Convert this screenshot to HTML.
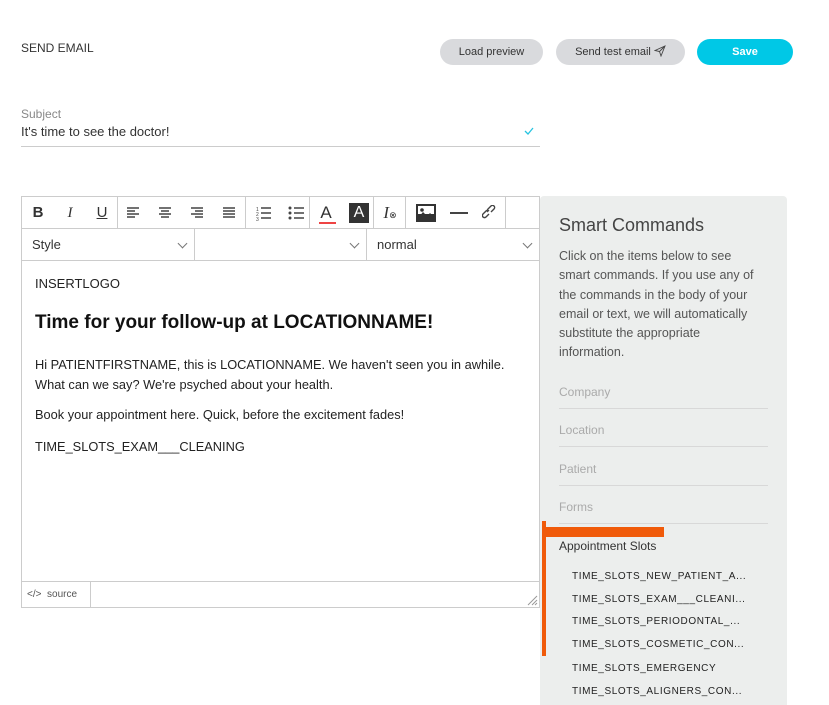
<!DOCTYPE html>
<html><head><meta charset="utf-8"><style>
*{box-sizing:border-box;margin:0;padding:0}
body{width:829px;height:705px;background:#fff;font-family:"Liberation Sans",sans-serif;position:relative;overflow:hidden;color:#333}
.a{position:absolute}
.btn{position:absolute;top:39px;height:26px;border-radius:13px;background:#d9dadd;font-size:11px;color:#333;text-align:center;line-height:26px}
.tb{position:absolute;top:197px;height:32px;border-right:1px solid #ccc}
.ic{position:absolute;top:0;height:32px;line-height:32px;font-size:15px;color:#333;text-align:center;width:32px}
.sel{position:absolute;top:229px;height:31px;border-right:1px solid #ccc;font-size:13px;line-height:31px;padding-left:10px;color:#333}
.chev{position:absolute;right:8px;top:11px;width:7px;height:7px;border-right:1px solid #777;border-bottom:1px solid #777;transform:rotate(45deg)}
.cat{position:absolute;left:559px;width:209px;font-size:12px;color:#aaa;border-bottom:1px solid #d8d8d8;height:24px;line-height:14px}
.ts{position:absolute;left:572px;font-size:10px;letter-spacing:0.6px;color:#222}
</style></head><body>
<div class="a" style="left:21px;top:41px;font-size:12px;color:#333">SEND EMAIL</div>
<div class="btn" style="left:440px;width:103px">Load preview</div>
<div class="btn" style="left:556px;width:129px">Send test email <svg width="12" height="12" viewBox="0 0 12 12" style="vertical-align:-2px"><path d="M1 5.5L11 1 7 11 5.5 6.5z M5.5 6.5L11 1" fill="none" stroke="#444" stroke-width="0.9"/></svg></div>
<div class="btn" style="left:697px;width:96px;background:#00c8e6;color:#fff;font-weight:bold">Save</div>
<div class="a" style="left:21px;top:107px;font-size:12px;color:#888">Subject</div>
<div class="a" style="left:21px;top:124px;font-size:13px;color:#333">It's time to see the doctor!</div>
<svg class="a" style="left:524px;top:127px" width="10" height="8" viewBox="0 0 10 8"><path d="M1 4l3 3 5-6" fill="none" stroke="#27c4e0" stroke-width="1.3"/></svg>
<div class="a" style="left:21px;top:146px;width:519px;height:1px;background:#ccc"></div>

<div class="a" style="left:21px;top:196px;width:519px;height:412px;border:1px solid #ccc"></div>
<div class="a" style="left:22px;top:228px;width:517px;height:1px;background:#ccc"></div>
<div class="a" style="left:22px;top:260px;width:517px;height:1px;background:#ccc"></div>
<div class="tb" style="left:22px;width:96px">
 <div class="ic" style="left:0;font-weight:bold">B</div><div class="ic" style="left:32px;font-style:italic;font-family:'Liberation Serif',serif">I</div><div class="ic" style="left:64px;text-decoration:underline">U</div></div>
<div class="tb" style="left:118px;width:128px">
 <svg class="a" style="left:8px;top:9px" width="112" height="14" viewBox="0 0 112 14" stroke="#444" stroke-width="1.4"><path d="M1 2h12M1 5h8M1 8h12M1 11h8 M33 2h12M35 5h8M33 8h12M35 11h8 M65 2h12M69 5h8M65 8h12M69 11h8 M97 2h12M97 5h12M97 8h12M97 11h12"/></svg></div>
<div class="tb" style="left:246px;width:64px">
 <svg class="a" style="left:10px;top:8px" width="50" height="16" viewBox="0 0 50 16"><text x="0" y="6" font-size="5" fill="#444">1</text><text x="0" y="11" font-size="5" fill="#444">2</text><text x="0" y="16" font-size="5" fill="#444">3</text><path d="M5 3h10M5 8h10M5 13h10 M38 3h10M38 8h10M38 13h10" stroke="#444" stroke-width="1.4"/><circle cx="34" cy="3" r="1.5" fill="#444"/><circle cx="34" cy="8" r="1.5" fill="#444"/><circle cx="34" cy="13" r="1.5" fill="#444"/></svg></div>
<div class="tb" style="left:310px;width:64px">
 <div class="ic" style="left:0;font-size:17px">A</div><div class="a" style="left:9px;top:25px;width:17px;height:2px;background:#e44"></div>
 <div class="a" style="left:39px;top:6px;width:20px;height:20px;background:#333;color:#fff;text-align:center;line-height:20px;font-size:16px">A</div></div>
<div class="tb" style="left:374px;width:32px"><div class="ic" style="left:0;font-style:italic;font-family:'Liberation Serif',serif;font-size:17px">I<span style="font-size:9px;font-style:normal">⊗</span></div></div>
<div class="tb" style="left:406px;width:100px">
 <svg class="a" style="left:10px;top:7px" width="20" height="18" viewBox="0 0 20 18"><rect x="0" y="0" width="20" height="18" fill="#333"/><rect x="2" y="2" width="16" height="8" fill="#fff"/><circle cx="6" cy="6" r="1.8" fill="#333"/><path d="M2 14l5-6 4 4 3-3 4 4v3H2z" fill="#333"/></svg>
 <div class="a" style="left:44px;top:15px;width:18px;height:2px;background:#444"></div>
 <svg class="a" style="left:76px;top:8px" width="16" height="16" viewBox="0 0 16 16" fill="none" stroke="#444" stroke-width="1.4"><path d="M7 9l-3 3a2 2 0 01-3-3l3-3a2 2 0 013 0M9 7l3-3a2 2 0 00-3-3L6 4a2 2 0 000 3"/></svg></div>
<div class="sel" style="left:22px;width:173px">Style<div class="chev"></div></div>
<div class="sel" style="left:195px;width:172px"><div class="chev"></div></div>
<div class="sel" style="left:367px;width:172px;border-right:none">normal<div class="chev"></div></div>

<div class="a" style="left:35px;top:276px;font-size:13px;color:#222">INSERTLOGO</div>
<div class="a" style="left:35px;top:312px;font-size:19px;font-weight:bold;color:#111">Time for your follow-up at LOCATIONNAME!</div>
<div class="a" style="left:35px;top:355px;font-size:12.8px;color:#222;line-height:20px">Hi PATIENTFIRSTNAME, this is LOCATIONNAME. We haven't seen you in awhile.<br>What can we say? We're psyched about your health.</div>
<div class="a" style="left:35px;top:407px;font-size:12.8px;color:#222">Book your appointment here. Quick, before the excitement fades!</div>
<div class="a" style="left:35px;top:439px;font-size:12.8px;color:#222">TIME_SLOTS_EXAM___CLEANING</div>
<div class="a" style="left:22px;top:581px;width:517px;height:1px;background:#ccc"></div>
<div class="a" style="left:90px;top:582px;width:1px;height:25px;background:#ccc"></div>
<div class="a" style="left:27px;top:589px;font-size:10px;color:#555">&lt;/&gt; &nbsp;source</div>
<svg class="a" style="left:527px;top:595px" width="11" height="11" viewBox="0 0 11 11" stroke="#999"><path d="M1 10L10 1M5 10l5-5M8 10l2-2"/></svg>

<div class="a" style="left:540px;top:196px;width:247px;height:509px;background:#eceeed;border-radius:4px 4px 0 0"></div>
<div class="a" style="left:559px;top:215px;font-size:18px;color:#444">Smart Commands</div>
<div class="a" style="left:559px;top:247px;width:202px;font-size:12.5px;color:#555;line-height:19.3px">Click on the items below to see smart commands. If you use any of the commands in the body of your email or text, we will automatically substitute the appropriate information.</div>
<div class="cat" style="top:385px">Company</div>
<div class="cat" style="top:423px">Location</div>
<div class="cat" style="top:462px">Patient</div>
<div class="cat" style="top:500px">Forms</div>
<div class="a" style="left:559px;top:539px;font-size:12px;color:#333">Appointment Slots</div>
<div class="ts" style="top:571px">TIME_SLOTS_NEW_PATIENT_A...</div>
<div class="ts" style="top:594px">TIME_SLOTS_EXAM___CLEANI...</div>
<div class="ts" style="top:616px">TIME_SLOTS_PERIODONTAL_...</div>
<div class="ts" style="top:639px">TIME_SLOTS_COSMETIC_CON...</div>
<div class="ts" style="top:663px">TIME_SLOTS_EMERGENCY</div>
<div class="ts" style="top:686px">TIME_SLOTS_ALIGNERS_CON...</div>
<div class="a" style="left:542px;top:521px;width:4px;height:135px;background:#f05a0a"></div>
<div class="a" style="left:542px;top:527px;width:122px;height:10px;background:#f05a0a"></div>
</body></html>
